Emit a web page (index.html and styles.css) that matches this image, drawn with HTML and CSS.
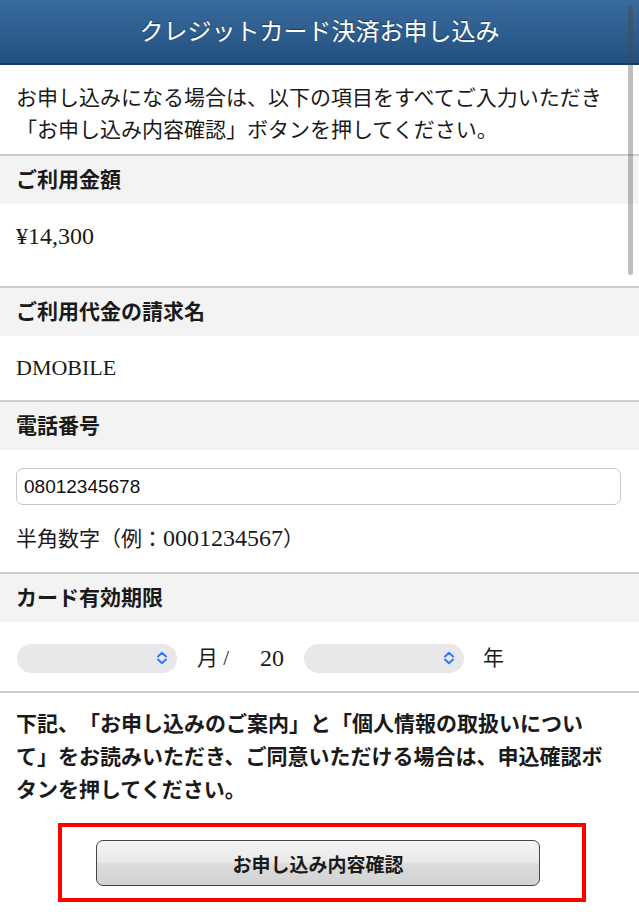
FILE: index.html
```html
<!DOCTYPE html>
<html lang="ja">
<head>
    <meta charset="utf-8">
    <!-- Card payment application form -->
    <title>クレジットカード決済お申し込み</title>
    <link rel="stylesheet" href="styles.css">
</head>
<body>
    <!-- Page heading -->
    <header class="page-title">
        <h1>クレジットカード決済お申し込み</h1>
    </header>

    <p class="intro">お申し込みになる場合は、以下の項目をすべてご入力いただき「お申し込み内容確認」ボタンを押してください。</p>

    <form>
        <!-- Amount -->
        <section class="item first">
            <h2 class="item-head">ご利用金額</h2>
            <div class="item-body amount"><span class="num">¥14,300</span></div>
        </section>

        <!-- Billing name -->
        <section class="item">
            <h2 class="item-head">ご利用代金の請求名</h2>
            <div class="item-body"><span class="latin">DMOBILE</span></div>
        </section>

        <!-- Phone number -->
        <section class="item">
            <h2 class="item-head">電話番号</h2>
            <div class="item-body phone">
                <input type="text" class="text-input" value="08012345678">
                <p class="hint">半角数字（例：<span class="num">0001234567</span>）</p>
            </div>
        </section>

        <!-- Card expiry -->
        <section class="item">
            <h2 class="item-head">カード有効期限</h2>
            <div class="item-body expiry">
                <div class="select-box">
                    <svg width="12" height="14" viewBox="0 0 12 14"><path d="M2 5.5 L6 1.8 L10 5.5 M2 8.5 L6 12.2 L10 8.5" fill="none" stroke="#2f7af5" stroke-width="2" stroke-linecap="round" stroke-linejoin="round"/></svg>
                </div>
                <span class="month">月 /</span>
                <span class="century num">20</span>
                <div class="select-box">
                    <svg width="12" height="14" viewBox="0 0 12 14"><path d="M2 5.5 L6 1.8 L10 5.5 M2 8.5 L6 12.2 L10 8.5" fill="none" stroke="#2f7af5" stroke-width="2" stroke-linecap="round" stroke-linejoin="round"/></svg>
                </div>
                <span class="year">年</span>
            </div>
        </section>

        <!-- Agreement and submit -->
        <section class="item agree">
            <p class="agree-text">下記、「お申し込みのご案内」と「個人情報の取扱いについて」をお読みいただき、ご同意いただける場合は、申込確認ボタンを押してください。</p>
            <div class="submit-frame">
                <button type="button" class="submit-btn">お申し込み内容確認</button>
            </div>
        </section>
    </form>

    <!-- Mobile scroll indicator -->
    <div class="scroll-thumb"></div>
</body>
</html>
```

FILE: styles.css
```css
/* Base page */
html, body {
    margin: 0;
    padding: 0;
}
body {
    background: #fff;
    color: #1a1a1a;
    font-family: "Liberation Serif", "Noto Sans CJK JP", serif;
    font-size: 21px;
    line-height: 32px;
    text-spacing-trim: space-all;
}
/* Latin text and digits run a little larger, like the mincho face */
.num {
    font-size: 24px;
    line-height: 1;
}
.latin {
    font-size: 22px;
    line-height: 1;
}
/* Blue title bar */
.page-title {
    height: 63px;
    background: linear-gradient(to bottom, #3a6b9e, #22517f);
    border-bottom: 2px solid #143b66;
    display: flex;
    align-items: center;
    justify-content: center;
}
.page-title h1 {
    margin: 0;
    color: #fff;
    font-size: 24px;
    font-weight: normal;
    text-shadow: 0 -1px 1px rgba(0, 0, 0, 0.4);
}
/* Intro text */
.intro {
    margin: 0;
    padding: 17px 16px 8px;
    border-bottom: 2px solid #cdcdcd;
}
form {
    margin: 0;
}
/* Each form item */
.item {
    border-top: 2px solid #cdcdcd;
}
.item.first {
    border-top: 0;
}
.item-head {
    margin: 0;
    height: 48px;
    line-height: 48px;
    padding: 0 16px;
    background: #f3f3f3;
    font-size: 21px;
    font-weight: bold;
}
.item-body {
    padding: 16px;
}
.item-body.amount {
    padding: 17px 16px 33px;
}
/* Phone input */
.item-body.phone {
    padding: 18px 18px 17px 16px;
}
.text-input {
    display: block;
    width: 100%;
    box-sizing: border-box;
    height: 37px;
    margin: 0;
    padding: 0 7px;
    border: 1px solid #c6c6c6;
    border-radius: 7px;
    background: #fff;
    color: #111;
    font-family: "Liberation Sans", "Noto Sans", sans-serif;
    font-size: 19px;
}
.hint {
    margin: 18px 0 0;
}
/* Expiry selects */
.item-body.expiry {
    display: flex;
    align-items: center;
    height: 32px;
    padding: 20px 16px 17px 17px;
}
.select-box {
    width: 160px;
    height: 29px;
    border-radius: 15px;
    background: #e8e8ea;
    display: flex;
    align-items: center;
    justify-content: flex-end;
    padding-right: 9px;
    box-sizing: border-box;
}
.select-box svg {
    display: block;
}
.month {
    margin-left: 20px;
    width: 40px;
}
.century {
    margin-left: 23px;
    margin-right: 20px;
}
.year {
    margin-left: 19px;
}
/* Agreement section */
.agree {
    padding: 15px 16px 0;
}
.agree-text {
    margin: 0;
    font-weight: bold;
    line-height: 33px;
}
/* Red frame around the submit button */
.submit-frame {
    width: 528px;
    box-sizing: border-box;
    margin: 16px 0 0 42px;
    border: 4px solid #ff0000;
    padding: 13px 42px 12px 34px;
}
.submit-btn {
    display: block;
    width: 444px;
    height: 46px;
    border: 1px solid #454545;
    border-radius: 7px;
    background: linear-gradient(to bottom, #f4f4f4 0%, #e9e9e9 48%, #dcdcdc 52%, #d2d2d2 100%);
    color: #1a1a1a;
    font-family: "Noto Sans CJK JP", sans-serif;
    font-size: 19px;
    font-weight: bold;
    padding: 0;
}
/* Overlay scrollbar */
.scroll-thumb {
    position: absolute;
    top: 5px;
    right: 6px;
    width: 5px;
    height: 270px;
    border-radius: 3px;
    background: rgba(70, 70, 70, 0.35);
}
```
